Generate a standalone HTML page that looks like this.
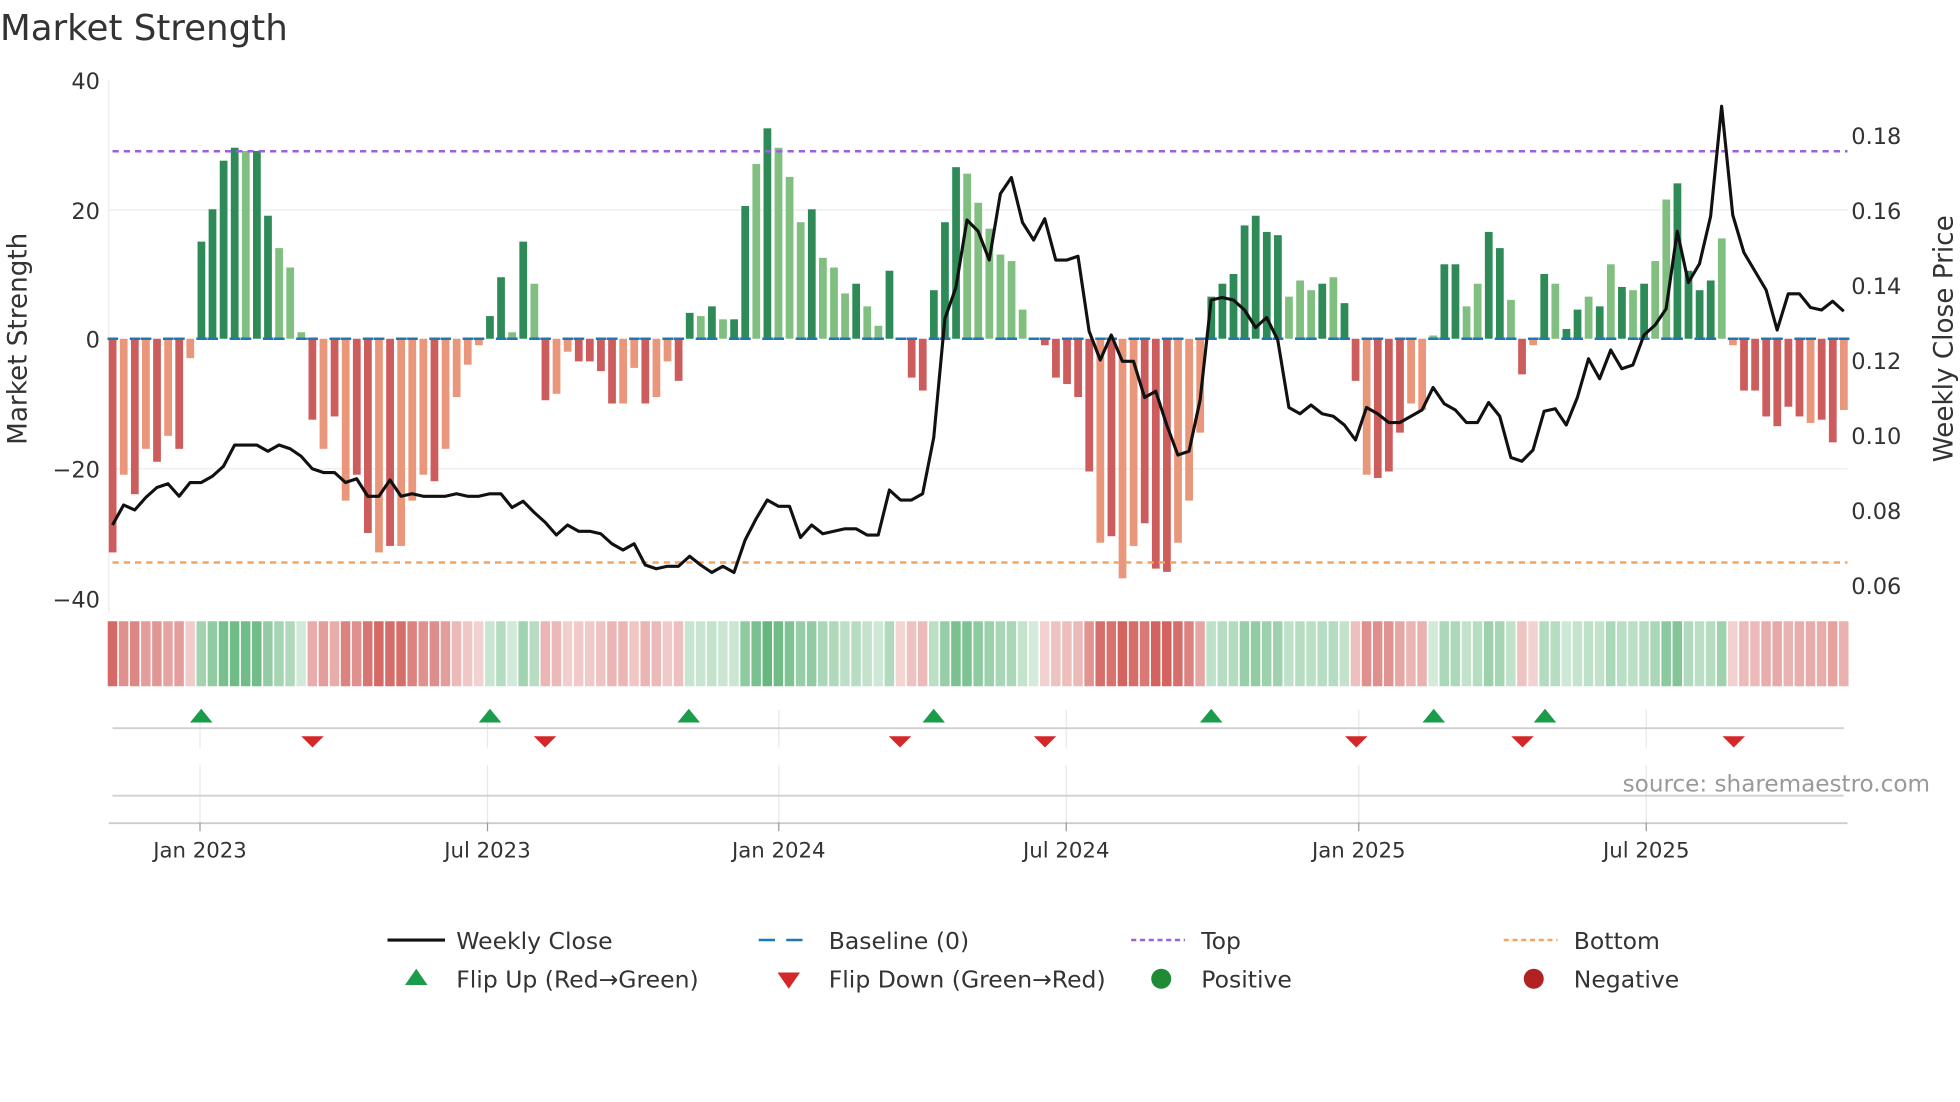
<!DOCTYPE html>
<html><head><meta charset="utf-8"><style>
html,body{margin:0;padding:0;background:#fff;}
svg{display:block;font-family:"DejaVu Sans","Liberation Sans",sans-serif;}
</style></head><body>
<svg id="s" width="1960" height="1102" viewBox="0 0 1568 881.6" xmlns="http://www.w3.org/2000/svg">
<rect width="1568" height="882" fill="#fff"/>
<text x="0" y="32" font-size="28.5" fill="#333">Market Strength</text>
<g stroke="#ececec" stroke-width="1">
<line x1="87" y1="168" x2="1478" y2="168"/>
<line x1="87" y1="375" x2="1478" y2="375"/>
<line x1="87" y1="64" x2="87" y2="490"/>
</g>
<g id="bars"></g>
<line x1="90" y1="121" x2="1478" y2="121" stroke="#9b5fe0" stroke-width="2" stroke-dasharray="5,4"/>
<line x1="90" y1="450" x2="1478" y2="450" stroke="#f4a460" stroke-width="2" stroke-dasharray="5,4"/>
<polyline id="price" fill="none" stroke="#111" stroke-width="2.5" stroke-linejoin="round"/>
<g font-size="18" fill="#333" text-anchor="end">
<text x="80" y="71">40</text><text x="80" y="278">0</text><text x="80" y="382">−20</text><text x="80" y="175">20</text><text x="80" y="486">−40</text>
</g>
<g font-size="18" fill="#333">
<text x="1481" y="115">0.18</text><text x="1481" y="175">0.16</text><text x="1481" y="235">0.14</text><text x="1481" y="295">0.12</text><text x="1481" y="355">0.10</text><text x="1481" y="415">0.08</text><text x="1481" y="475">0.06</text>
</g>
<text transform="translate(21,271) rotate(-90)" font-size="21" fill="#333" text-anchor="middle">Market Strength</text>
<text transform="translate(1562,271) rotate(-90)" font-size="21" fill="#333" text-anchor="middle">Weekly Close Price</text>
<g id="strip"></g>
<g stroke="#e8e8e8" stroke-width="1">
<line x1="160" y1="568" x2="160" y2="598"/><line x1="390" y1="568" x2="390" y2="598"/><line x1="623" y1="568" x2="623" y2="598"/><line x1="853" y1="568" x2="853" y2="598"/><line x1="1087" y1="568" x2="1087" y2="598"/><line x1="1317" y1="568" x2="1317" y2="598"/>
<line x1="160" y1="612" x2="160" y2="658"/><line x1="390" y1="612" x2="390" y2="658"/><line x1="623" y1="612" x2="623" y2="658"/><line x1="853" y1="612" x2="853" y2="658"/><line x1="1087" y1="612" x2="1087" y2="658"/><line x1="1317" y1="612" x2="1317" y2="658"/>
</g>
<line x1="90" y1="582.5" x2="1475" y2="582.5" stroke="#d0d0d0" stroke-width="1.5"/>
<line x1="90" y1="636.5" x2="1475" y2="636.5" stroke="#d0d0d0" stroke-width="1.5"/>
<line x1="87" y1="658.5" x2="1478" y2="658.5" stroke="#ccc" stroke-width="1.5"/>
<g stroke="#999" stroke-width="1"><line x1="160" y1="658" x2="160" y2="665"/><line x1="390" y1="658" x2="390" y2="665"/><line x1="623" y1="658" x2="623" y2="665"/><line x1="853" y1="658" x2="853" y2="665"/><line x1="1087" y1="658" x2="1087" y2="665"/><line x1="1317" y1="658" x2="1317" y2="665"/></g>
<g id="marks"></g>
<text x="1544" y="633" font-size="18.5" fill="#999" text-anchor="end">source: sharemaestro.com</text>
<g font-size="17" fill="#333" text-anchor="middle">
<text x="160" y="686">Jan 2023</text><text x="390" y="686">Jul 2023</text><text x="623" y="686">Jan 2024</text><text x="853" y="686">Jul 2024</text><text x="1087" y="686">Jan 2025</text><text x="1317" y="686">Jul 2025</text>
</g>
<g font-size="18.8" fill="#333">
<line x1="310" y1="752" x2="356" y2="752" stroke="#111" stroke-width="2.5"/>
<text x="365" y="759">Weekly Close</text>
<line x1="607" y1="752" x2="650" y2="752" stroke="#1f77b4" stroke-width="2" stroke-dasharray="13,9"/>
<text x="663" y="759">Baseline (0)</text>
<line x1="905" y1="752" x2="948" y2="752" stroke="#9b5fe0" stroke-width="2" stroke-dasharray="4,3"/>
<text x="961" y="759">Top</text>
<line x1="1203" y1="752" x2="1246" y2="752" stroke="#f4a460" stroke-width="2" stroke-dasharray="4,3"/>
<text x="1259" y="759">Bottom</text>
<polygon points="324,788 342,788 333,775" fill="#1a9c4a"/>
<text x="365" y="790">Flip Up (Red→Green)</text>
<polygon points="622,778 640,778 631,791" fill="#d62728"/>
<text x="663" y="790">Flip Down (Green→Red)</text>
<circle cx="929" cy="783" r="8" fill="#1f8c35"/>
<text x="961" y="790">Positive</text>
<circle cx="1227" cy="783" r="8" fill="#b22222"/>
<text x="1259" y="790">Negative</text>
</g>
</svg>
<script>
var v=[-33,-21,-24,-17,-19,-15,-17,-3,15,20,27.5,29.5,29,29,19,14,11,1,-12.5,-17,-12,-25,-21,-30,-33,-32,-32,-25,-21,-22,-17,-9,-4,-1,3.5,9.5,1,15,8.5,-9.5,-8.5,-2,-3.5,-3.5,-5,-10,-10,-4.5,-10,-9,-3.5,-6.5,4,3.5,5,3,3,20.5,27,32.5,29.5,25,18,20,12.5,11,7,8.5,5,2,10.5,0,-6,-8,7.5,18,26.5,25.5,21,17,13,12,4.5,0,-1,-6,-7,-9,-20.5,-31.5,-30.5,-37,-32,-28.5,-35.5,-36,-31.5,-25,-14.5,6.5,8.5,10,17.5,19,16.5,16,6.5,9,7.5,8.5,9.5,5.5,-6.5,-21,-21.5,-20.5,-14.5,-10,-11,0.5,11.5,11.5,5,8.5,16.5,14,6,-5.5,-1,10,8.5,1.5,4.5,6.5,5,11.5,8,7.5,8.5,12,21.5,24,10.5,7.5,9,15.5,-1,-8,-8,-12,-13.5,-10.5,-12,-13,-12.5,-16,-11];
var py=[420,404,408,398,390,387,397,386,386,381,373,356,356,356,361,356,359,365,375,378,378,386,383,397,397,384,397,395,397,397,397,395,397,397,395,395,406,401,410,418,428,420,425,425,427,435,440,435,452,455,453,453,445,452,458,453,458,432,415,400,405,405,430,420,427,425,423,423,428,428,392,400,400,395,350,255,230,176,185,208,155,142,178,192,175,208,208,205,265,288,268,289,289,318,313,340,364,361,320,240,238,240,248,262,254,272,326,331,324,331,333,340,352,326,331,338,338,333,328,310,323,328,338,338,322,333,366,369,360,329,327,340,318,287,303,280,295,292,268,260,247,185,226,211,173,85,172,202,217,232,264,235,235,246,248,241,249];
var n=v.length,dx=(1475-90)/(n-1),ns="http://www.w3.org/2000/svg";
function el(t,a,p){var e=document.createElementNS(ns,t);for(var k in a)e.setAttribute(k,a[k]);p.appendChild(e);return e;}
var B=document.getElementById('bars'),S=document.getElementById('strip'),M=document.getElementById('marks');
var light=[1,3,5,7,12,15,16,17,19,21,24,26,27,28,30,31,32,33,36,38,40,41,46,47,49,50,53,55,58,60,61,62,64,65,66,68,69,77,78,79,80,81,82,89,91,92,96,97,98,106,107,108,110,113,117,118,119,122,123,126,128,130,133,135,137,139,140,145,146,153,156];
var ls={};light.forEach(function(i){ls[i]=1});
function stripSign(x){var r=[[155,245],[388,430],[548,715],[740,830],[963,1080],[1143,1212],[1230,1380]];for(var i=0;i<r.length;i++)if(x>=r[i][0]&&x<r[i][1])return 1;return -1;}
var pts=[];
for(var i=0;i<n;i++){
 var x=90+i*dx,h=v[i]*5.18,c;
 if(v[i]>=0)c=ls[i]?'#80bf80':'#2e8b57';else c=ls[i]?'#e9967a':'#cd5c5c';
 if(Math.abs(h)>0.3)el('rect',{x:x-3,y:h>0?271-h:271,width:6.2,height:Math.abs(h),fill:c},B);
 if(i%3!=1)el('rect',{x:x-4,y:270,width:8.5,height:2,fill:'#1f77b4'},B);
 var sg=stripSign(x),a=Math.min(1,Math.abs(v[i])/35);
 el('rect',{x:x-3.8,y:497,width:7.6,height:52,fill:sg>0?'#3aa35a':'#c9413c','fill-opacity':(0.22+0.6*a).toFixed(2)},S);
 pts.push(x.toFixed(1)+','+py[Math.min(i,py.length-1)]);
}
document.getElementById('price').setAttribute('points',pts.join(' '));
[161,392,551,747,969,1147,1236].forEach(function(x){el('polygon',{points:(x-9)+',578 '+(x+9)+',578 '+x+',567',fill:'#1a9c4a'},M);});
[250,436,720,836,1085,1218,1387].forEach(function(x){el('polygon',{points:(x-9)+',589 '+(x+9)+',589 '+x+',598',fill:'#d62728'},M);});
</script>
</body></html>
